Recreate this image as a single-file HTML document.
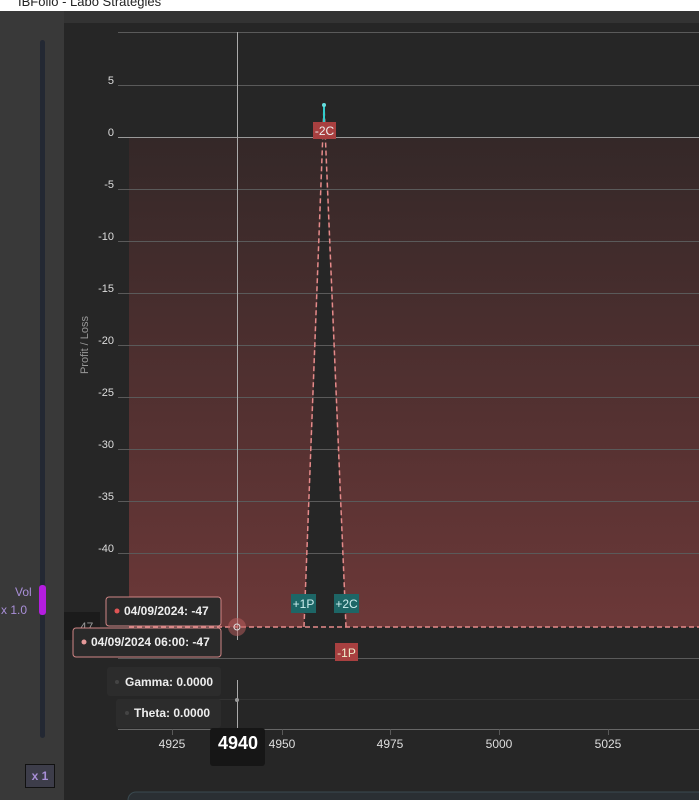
<!DOCTYPE html>
<html><head><style>
html,body{margin:0;padding:0;width:699px;height:800px;overflow:hidden;background:#333;font-family:"Liberation Sans",sans-serif}
.t{position:absolute;font-size:12px;color:#ddd}
</style></head><body>
<div style="position:absolute;left:0;top:0;width:699px;height:11px;background:#fff;overflow:hidden"><span style="position:absolute;left:18px;top:-6px;font-size:13px;color:#222">IBFolio - Labo Strategies</span></div>
<div style="position:absolute;left:0;top:11px;width:64px;height:789px;background:#393939"></div>
<div style="position:absolute;left:64px;top:23px;width:635px;height:777px;background:#262626"></div>
<div style="position:absolute;left:40px;top:40px;width:5px;height:698px;background:#232833;border-radius:3px"></div>
<div style="position:absolute;left:39px;top:585px;width:7px;height:30px;background:#b41de0;border-radius:3px"></div>
<div class="t" style="left:15px;top:585px;color:#a98fd8">Vol</div>
<div class="t" style="left:1px;top:603px;color:#a98fd8">x 1.0</div>
<div style="position:absolute;left:25px;top:764px;width:28px;height:22px;background:#3d3d4a;border:1px solid #111;color:#a98fd8;font-size:12px;font-weight:bold;text-align:center;line-height:22px">x 1</div>
<svg width="699" height="800" style="position:absolute;left:0;top:0" font-family="Liberation Sans" font-size="11" fill="#ddd">
<defs><linearGradient id="g" x1="0" y1="0" x2="0" y2="1"><stop offset="0" stop-color="#342828"/><stop offset="1" stop-color="#6c3838"/></linearGradient></defs>
<rect x="129" y="137" width="570" height="490" fill="url(#g)"/>
<polygon points="304,627 324,137 346,627" fill="#262626"/>
<g stroke="#5a5a5a" stroke-width="1">
<line x1="118" y1="32.5" x2="699" y2="32.5"/>
<line x1="118" y1="85.5" x2="699" y2="85.5"/>
<line x1="118" y1="137.5" x2="699" y2="137.5" stroke="#999"/>
<line x1="118" y1="189.5" x2="699" y2="189.5"/>
<line x1="118" y1="241.5" x2="699" y2="241.5"/>
<line x1="118" y1="293.5" x2="699" y2="293.5"/>
<line x1="118" y1="345.5" x2="699" y2="345.5"/>
<line x1="118" y1="397.5" x2="699" y2="397.5"/>
<line x1="118" y1="449.5" x2="699" y2="449.5"/>
<line x1="118" y1="501.5" x2="699" y2="501.5"/>
<line x1="118" y1="553.5" x2="699" y2="553.5"/>
<line x1="118" y1="658.5" x2="699" y2="658.5"/>
<line x1="118" y1="699.5" x2="699" y2="699.5" stroke="#333"/>
<line x1="118" y1="729.5" x2="699" y2="729.5" stroke="#666"/>
<line x1="237.5" y1="32" x2="237.5" y2="640" stroke="#aaa"/>
<line x1="237.5" y1="680" x2="237.5" y2="729" stroke="#aaa"/>
<line x1="172.5" y1="729" x2="172.5" y2="735"/><line x1="282.5" y1="729" x2="282.5" y2="735"/><line x1="390.5" y1="729" x2="390.5" y2="735"/><line x1="499.5" y1="729" x2="499.5" y2="735"/><line x1="608.5" y1="729" x2="608.5" y2="735"/>
</g>
<g text-anchor="end">
<text x="114" y="84">5</text><text x="114" y="136">0</text><text x="114" y="188">-5</text><text x="114" y="240">-10</text><text x="114" y="292">-15</text><text x="114" y="344">-20</text><text x="114" y="396">-25</text><text x="114" y="448">-30</text><text x="114" y="500">-35</text><text x="114" y="552">-40</text>
</g>
<text x="88" y="345" transform="rotate(-90 88 345)" text-anchor="middle" fill="#999">Profit / Loss</text>
<line x1="129" y1="627" x2="699" y2="627" stroke="#e58a8a" stroke-width="1.5" stroke-dasharray="5,3"/>
<polyline points="304,627 324,105 346,627" fill="none" stroke="#e58a8a" stroke-width="1.5" stroke-dasharray="5,3"/>
<line x1="324" y1="105" x2="324" y2="128" stroke="#3cc" stroke-width="2"/>
<circle cx="324" cy="105" r="2" fill="#6dd"/>
<rect x="313" y="122" width="23" height="17" fill="#a84040"/><text x="324.5" y="135" text-anchor="middle" fill="#eee" font-size="12">-2C</text>
<rect x="291" y="594" width="25" height="19" fill="#1d6666"/><text x="303.5" y="608" text-anchor="middle" fill="#cee" font-size="12">+1P</text>
<rect x="334" y="594" width="25" height="19" fill="#1d6666"/><text x="346.5" y="608" text-anchor="middle" fill="#cee" font-size="12">+2C</text>
<rect x="335" y="643" width="23" height="18" fill="#a84040"/><text x="346.5" y="657" text-anchor="middle" fill="#eec" font-size="12">-1P</text>
<circle cx="237" cy="627" r="9" fill="#c06060" opacity="0.5"/><circle cx="237" cy="627" r="3" fill="none" stroke="#ddd"/>
<circle cx="237" cy="700" r="2" fill="#999"/>
<rect x="64" y="612" width="36" height="28" fill="#1b1b1b"/>
<text x="76" y="631" fill="#999" font-size="12">-47</text>
<g font-size="12">
<text x="172" y="748" text-anchor="middle">4925</text><text x="282" y="748" text-anchor="middle">4950</text><text x="390" y="748" text-anchor="middle">4975</text><text x="499" y="748" text-anchor="middle">5000</text><text x="608" y="748" text-anchor="middle">5025</text>
</g>
<rect x="210" y="728" width="55" height="38" rx="3" fill="#161616"/>
<text x="238" y="749" text-anchor="middle" fill="#fff" font-size="18" font-weight="bold">4940</text>
<rect x="106" y="597" width="115" height="29" rx="3" fill="#2a2a2a" stroke="#d08585"/>
<circle cx="117" cy="611" r="2.5" fill="#e05555"/><text x="124" y="615" font-size="12" font-weight="bold" fill="#eee">04/09/2024: -47</text>
<rect x="73" y="628" width="148" height="29" rx="3" fill="#2a2a2a" stroke="#d08585"/>
<circle cx="84" cy="642" r="2.5" fill="#e59999"/><text x="91" y="646" font-size="12" font-weight="bold" fill="#eee">04/09/2024 06:00: -47</text>
<rect x="107" y="667" width="114" height="29" rx="3" fill="#2c2c2c"/>
<circle cx="117" cy="682" r="2" fill="#444"/><text x="125" y="686" font-size="12" font-weight="bold" fill="#eee">Gamma: 0.0000</text>
<rect x="116" y="699" width="105" height="29" rx="3" fill="#2c2c2c"/>
<circle cx="127" cy="713" r="2" fill="#444"/><text x="134" y="717" font-size="12" font-weight="bold" fill="#eee">Theta: 0.0000</text>
<rect x="128" y="792" width="580" height="20" rx="8" fill="#2a2f33" stroke="#3a4a50"/>
</svg>
</body></html>
